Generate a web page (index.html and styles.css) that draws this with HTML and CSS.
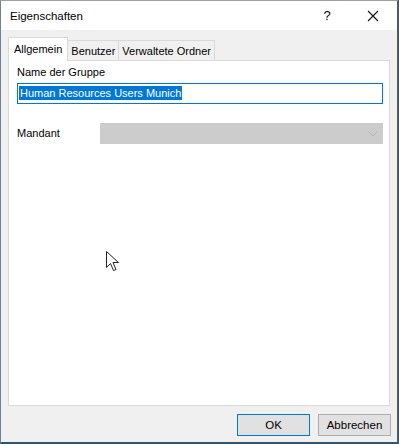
FILE: index.html
```html
<!DOCTYPE html>
<html lang="de">
<head>
<meta charset="UTF-8" />
<title>Eigenschaften</title>
<link rel="stylesheet" href="styles.css">
</head>
<body>
<div class="window">
  <div class="titlebar">
    <span class="title">Eigenschaften</span>
    <span class="help">?</span>
    <span class="close">
      <svg width="12" height="12" viewBox="0 0 12 12"><path d="M1 1L11 11M11 1L1 11" stroke="#111" stroke-width="1.1" fill="none"/></svg>
    </span>
  </div>

  <div class="body">
    <div class="tabs">
      <div class="tab active">Allgemein</div>
      <div class="tab">Benutzer</div>
      <div class="tab">Verwaltete Ordner</div>
    </div>

    <div class="panel">
      <div class="label">Name der Gruppe</div>
      <div class="textbox"><span class="sel">Human Resources Users Munich</span></div>

      <div class="row">
        <span class="label">Mandant</span>
        <div class="combo">
          <svg width="10" height="6" viewBox="0 0 10 6"><path d="M0.5 0.5L5 5L9.5 0.5" stroke="#b4b4b4" stroke-width="1" fill="none"/></svg>
        </div>
      </div>

      <svg class="cursor" width="14" height="21" viewBox="0 0 14 21">
        <path d="M0.5 0.5V16.5L4.5 12.5L7.5 19.5L10 18.5L7 11.5H12.5Z" fill="#fff" stroke="#222" stroke-width="1"/>
      </svg>
    </div>

    <div class="buttons">
      <button class="btn default">OK</button>
      <button class="btn">Abbrechen</button>
    </div>
  </div>
</div>
</body>
</html>
```

FILE: styles.css
```css
* {
  box-sizing: border-box;
}

body {
  margin: 0;
  width: 399px;
  height: 444px;
  font-family: "Liberation Sans", Arial, sans-serif;
  font-size: 11px;
  color: #000;
  overflow: hidden;
}

.window {
  width: 399px;
  height: 444px;
  display: flex;
  flex-direction: column;
  border-left: 1px solid #6f8294;
  border-right: 2px solid #4d5a66;
  border-bottom: 2px solid #2f5570;
  border-top: 1px solid #a0a0a0;
  background: #f0f0f0;
}

.titlebar {
  height: 29px;
  background: #fff;
  display: flex;
  align-items: center;
  padding-left: 9px;
}

.title {
  flex: 1;
  font-size: 11.5px;
}

.help {
  width: 46px;
  text-align: center;
  font-size: 13px;
}

.close {
  width: 46px;
  display: flex;
  justify-content: center;
  margin-right: 1px;
}

.body {
  flex: 1;
  display: flex;
  flex-direction: column;
  padding: 7px 7px 0 7px;
}

.tabs {
  display: flex;
  align-items: flex-end;
  height: 23px;
  position: relative;
  z-index: 1;
}

.tab {
  height: 20px;
  padding: 4px 3px 0 3px;
  background: #f0f0f0;
  border: 1px solid #d9d9d9;
  border-bottom: none;
  margin-left: -1px;
}

.tab.active {
  height: 24px;
  margin-left: 0;
  margin-bottom: -1px;
  background: #fff;
  padding: 5px 5px 0 5px;
  z-index: 2;
  position: relative;
}

.panel {
  height: 346px;
  background: #fff;
  border: 1px solid #d9d9d9;
  padding: 4px 6px 0 8px;
  position: relative;
}

.label {
  line-height: 15px;
}

.textbox {
  margin-top: 3px;
  height: 21px;
  border: 1px solid #0078d7;
  padding: 2px 1px;
  line-height: 15px;
}

.sel {
  background: #0078d7;
  color: #fff;
  padding: 1px 1px;
}

.row {
  margin-top: 19px;
  display: flex;
  align-items: center;
  height: 21px;
}

.row .label {
  width: 83px;
}

.combo {
  flex: 1;
  height: 21px;
  background: #cccccc;
  border: 1px solid #cccccc;
  display: flex;
  justify-content: flex-end;
  align-items: center;
  padding-right: 4px;
}

.cursor {
  position: absolute;
  left: 97px;
  top: 190px;
}

.buttons {
  display: flex;
  justify-content: flex-end;
  gap: 8px;
  padding-top: 8px;
  margin-right: -1px;
}

.btn {
  width: 73px;
  height: 22px;
  background: #e1e1e1;
  border: 1px solid #adadad;
  font-family: "Liberation Sans", Arial, sans-serif;
  font-size: 11.5px;
  color: #000;
  padding: 0;
}

.btn.default {
  border: 1px solid #0078d7;
}
```
